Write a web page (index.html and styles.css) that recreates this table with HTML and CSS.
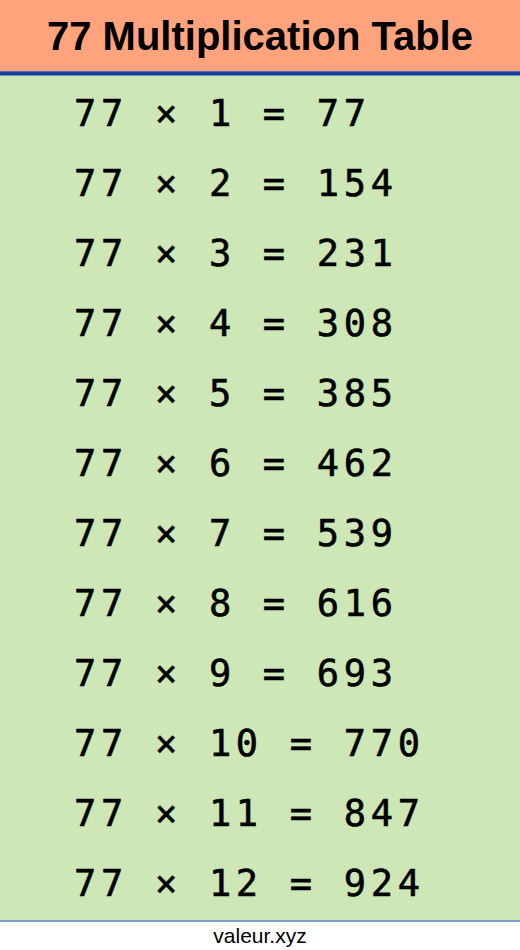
FILE: index.html
```html
<!DOCTYPE html>
<html lang="en">
<head>
<meta charset="utf-8">
<title>77 Multiplication Table</title>
<link rel="stylesheet" href="styles.css">
</head>
<body>
<div class="page">
  <header class="title-bar">
    <h1 class="title">77 Multiplication Table</h1>
  </header>
  <div class="rule"></div>
  <main class="table">
    <div class="row">77 × 1 = 77</div>
    <div class="row">77 × 2 = 154</div>
    <div class="row">77 × 3 = 231</div>
    <div class="row">77 × 4 = 308</div>
    <div class="row">77 × 5 = 385</div>
    <div class="row">77 × 6 = 462</div>
    <div class="row">77 × 7 = 539</div>
    <div class="row">77 × 8 = 616</div>
    <div class="row">77 × 9 = 693</div>
    <div class="row">77 × 10 = 770</div>
    <div class="row">77 × 11 = 847</div>
    <div class="row">77 × 12 = 924</div>
  </main>
  <footer class="footer">valeur.xyz</footer>
</div>
</body>
</html>
```
FILE: styles.css
```css
html, body {
  margin: 0;
  padding: 0;
  background: #ffffff;
}

.page {
  width: 520px;
  display: flex;
  flex-direction: column;
}

.title-bar {
  height: 71px;
  background: #ffa37d;
  display: flex;
  align-items: center;
  justify-content: center;
}

.title {
  margin: 0;
  font-family: "Liberation Sans", Arial, sans-serif;
  font-weight: bold;
  font-size: 40px;
  line-height: 1;
  color: #000000;
}

.rule {
  height: 5px;
  background: linear-gradient(to bottom, #4f6fb8 0, #4f6fb8 1px, #1a3d9c 1px, #1a3d9c 4px, #6d8cc6 4px);
}

.table {
  background: #cde7b7;
  padding: 3px 0 1px;
  border-bottom: 2px solid #7e9ccb;
}

.row {
  height: 70px;
  line-height: 70px;
  padding-left: 74px;
  font-family: "DejaVu Sans Mono", monospace;
  font-weight: normal;
  font-size: 37px;
  letter-spacing: 4.7px;
  color: #000000;
  white-space: pre;
  -webkit-text-stroke: 0.6px #000000;
}

.footer {
  height: 28px;
  display: flex;
  align-items: center;
  justify-content: center;
  font-family: "Liberation Sans", Arial, sans-serif;
  font-size: 21px;
  color: #000000;
}
```
